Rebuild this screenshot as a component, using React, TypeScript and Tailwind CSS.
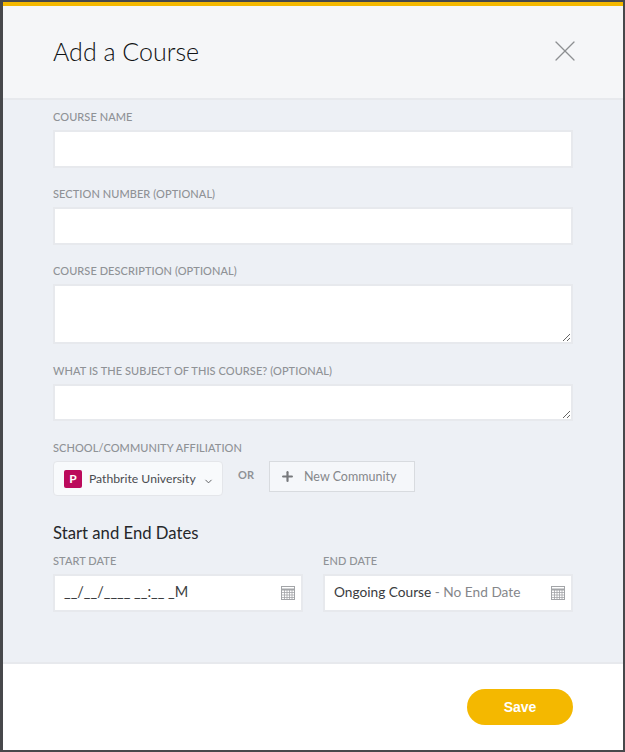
import React from 'react';
import { ChevronDown, Plus, X } from 'lucide-react';

const labelClass = 'block text-[11px] leading-[14px] tracking-[0.07px] font-medium text-[#8f9296] uppercase';
const fieldClass = 'block w-full bg-white border-2 border-[#e7e9ed] outline-none';

const CalendarIcon: React.FC = () => (
    <svg width="14" height="14" viewBox="0 0 14 14" className="shrink-0" fill="none" stroke="#a3a5a8" strokeWidth="1">
        <rect x="0.5" y="0.5" width="13" height="13" />
        <path d="M0.5 3.5H13.5" strokeWidth="2" />
        <path d="M0.5 6.5H13.5M0.5 9H13.5M0.5 11.5H13.5M3.5 4V13.5M6 4V13.5M8.5 4V13.5M11 4V13.5" strokeWidth="0.8" />
    </svg>
);

export default function App() {
    return (
        <div className="h-[752px] bg-[#47484b] pt-[2px] pr-[2px] pb-[2px] pl-[3px] font-['Lato','Open_Sans',sans-serif]">
            <div className="flex flex-col h-full bg-white">
                {/* Header */}
                <div className="flex items-center justify-between h-[98px] pl-[50px] pr-[40px] pb-[3px] bg-[#f5f6f8] border-t-4 border-t-[#f4b800] border-b-2 border-b-[#e7e9ed]">
                    <h1 className="text-[25px] leading-[30px] font-light text-[#101214]">Add a Course</h1>
                    <button aria-label="Close" className="mt-[1px] text-[#8d8f92]">
                        <X size={36} strokeWidth={0.8} />
                    </button>
                </div>

                {/* Form */}
                <div className="flex-1 bg-[#edf0f5] pl-[50px] pr-[50px] pt-[10px]">
                    <label className={labelClass}>Course Name</label>
                    <input className={`${fieldClass} h-[38px] mt-[6px]`} />

                    <label className={`${labelClass} mt-[19px]`}>Section Number (optional)</label>
                    <input className={`${fieldClass} h-[38px] mt-[6px]`} />

                    <label className={`${labelClass} mt-[19px]`}>Course Description (optional)</label>
                    <textarea className={`${fieldClass} h-[60px] mt-[6px]`} />

                    <label className={`${labelClass} mt-[20px]`}>What is the subject of this course? (optional)</label>
                    <textarea className={`${fieldClass} h-[37px] mt-[6px]`} />

                    <label className={`${labelClass} mt-[20px]`}>School/Community Affiliation</label>
                    <div className="flex items-start mt-[6px]">
                        <div className="flex items-center w-[170px] h-[35px] pl-[10px] bg-[#f8fafc] border border-[#e4e6ea] rounded-[4px]">
                            <span className="flex items-center justify-center w-[18px] h-[18px] bg-[#bb0a5c] rounded-[2px] text-white text-[12px] font-bold">P</span>
                            <span className="ml-[7px] mt-[1px] text-[12.2px] text-[#4a4c50] whitespace-nowrap">Pathbrite University</span>
                            <ChevronDown size={11} strokeWidth={2} className="ml-[7px] mt-[5px] text-[#55575a]" />
                        </div>
                        <span className="w-[46px] mt-[7px] text-center text-[11px] leading-[14px] font-bold text-[#8f9296]">OR</span>
                        <button className="flex items-center w-[146px] h-[31px] pl-[10px] pt-[1px] bg-[#f5f7fa] border border-[#d8dbdf] text-[12.5px] text-[#85878b]">
                            <Plus size={15} strokeWidth={3.5} className="-mt-[2px] text-[#77797c]" />
                            <span className="ml-[9px]">New Community</span>
                        </button>
                    </div>

                    <h2 className="mt-[27px] text-[16.7px] leading-[20px] font-normal text-[#25272a]">Start and End Dates</h2>

                    <div className="grid grid-cols-2 gap-x-[20px] mt-[11px]">
                        <div>
                            <label className={labelClass}>Start Date</label>
                            <div className={`${fieldClass} flex items-center justify-between h-[38px] mt-[6px] pl-[9px] pr-[6px]`}>
                                <span className="-mt-[2px] text-[14.5px] text-[#3a3c40]">__/__/____ __:__ _M</span>
                                <CalendarIcon />
                            </div>
                        </div>
                        <div>
                            <label className={labelClass}>End Date</label>
                            <div className={`${fieldClass} flex items-center justify-between h-[38px] mt-[6px] pl-[9px] pr-[6px]`}>
                                <span className="-mt-[1px] text-[13.7px] text-[#3a3c40]">
                                    Ongoing Course <span className="text-[#85878b]">- No End Date</span>
                                </span>
                                <CalendarIcon />
                            </div>
                        </div>
                    </div>
                </div>

                {/* Footer */}
                <div className="flex items-start justify-end h-[88px] pt-[25px] pr-[50px] bg-white border-t-2 border-t-[#e7e9ed]">
                    <button className="w-[106px] h-[36px] rounded-full bg-[#f4b800] text-white text-[14px] font-bold font-['Liberation_Sans',sans-serif]">
                        Save
                    </button>
                </div>
            </div>
        </div>
    );
}
